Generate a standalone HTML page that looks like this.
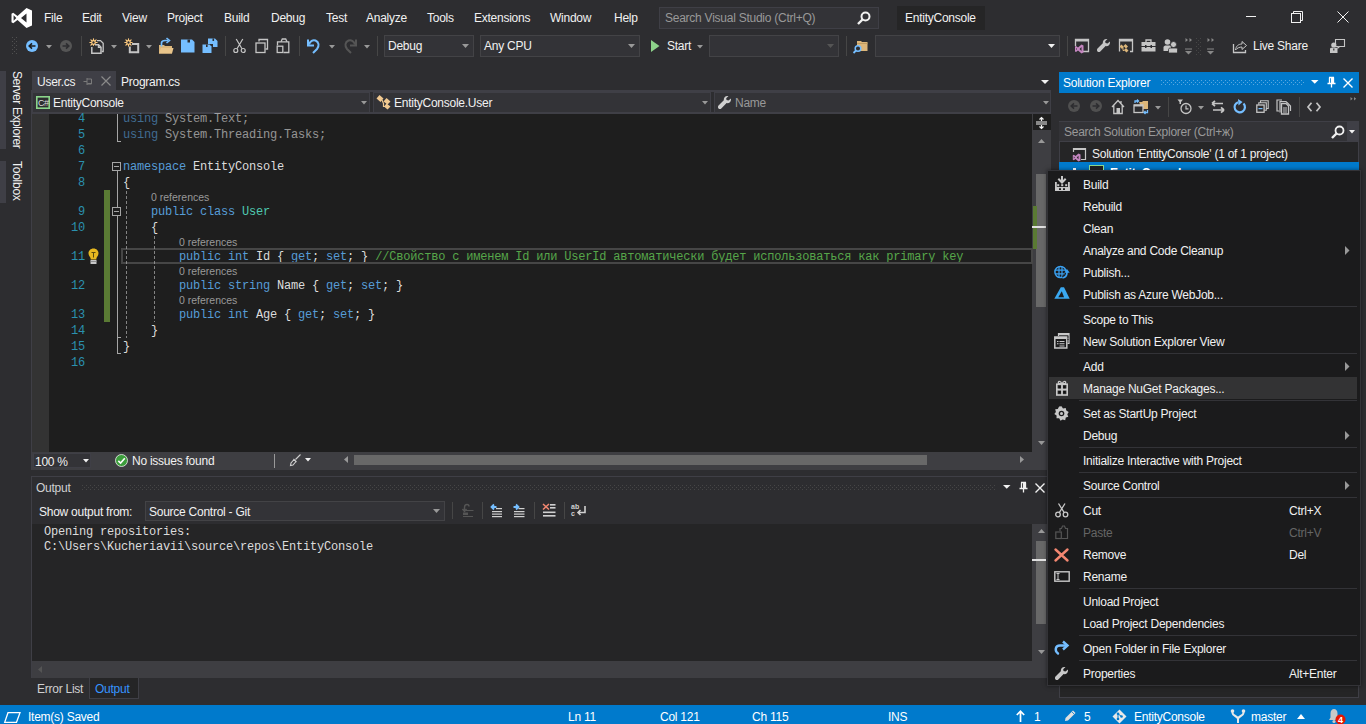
<!DOCTYPE html><html><head><meta charset="utf-8"><style>
html,body{margin:0;padding:0;}
body{width:1366px;height:724px;overflow:hidden;position:relative;background:#2d2d30;font-family:"Liberation Sans",sans-serif;font-size:12px;}
.a{position:absolute;}
.t{white-space:nowrap;font-family:"Liberation Sans",sans-serif;letter-spacing:-0.25px;}
.m{white-space:pre;font-family:"Liberation Mono",monospace;font-size:12px;letter-spacing:-0.2px;line-height:16px;}
svg{overflow:visible;}
</style></head><body>
<svg class="a" style="left:11px;top:8px;" width="22" height="20" viewBox="0 0 22 20"><path d="M15.5 0 L21 2.5 V17.5 L15.5 20 L6.5 12 L2.2 15.3 L0.5 14.3 V5.7 L2.2 4.7 L6.5 8 Z M15.5 5.5 L10 10 L15.5 14.5 Z M2.6 7.3 V12.7 L5.3 10 Z" fill="#fff" fill-rule="evenodd"/></svg>
<div class="a t" style="left:44px;top:12px;color:#f1f1f1;font-size:12px;line-height:12px;">File</div>
<div class="a t" style="left:82px;top:12px;color:#f1f1f1;font-size:12px;line-height:12px;">Edit</div>
<div class="a t" style="left:122px;top:12px;color:#f1f1f1;font-size:12px;line-height:12px;">View</div>
<div class="a t" style="left:167px;top:12px;color:#f1f1f1;font-size:12px;line-height:12px;">Project</div>
<div class="a t" style="left:224px;top:12px;color:#f1f1f1;font-size:12px;line-height:12px;">Build</div>
<div class="a t" style="left:271px;top:12px;color:#f1f1f1;font-size:12px;line-height:12px;">Debug</div>
<div class="a t" style="left:326px;top:12px;color:#f1f1f1;font-size:12px;line-height:12px;">Test</div>
<div class="a t" style="left:366px;top:12px;color:#f1f1f1;font-size:12px;line-height:12px;">Analyze</div>
<div class="a t" style="left:427px;top:12px;color:#f1f1f1;font-size:12px;line-height:12px;">Tools</div>
<div class="a t" style="left:474px;top:12px;color:#f1f1f1;font-size:12px;line-height:12px;">Extensions</div>
<div class="a t" style="left:550px;top:12px;color:#f1f1f1;font-size:12px;line-height:12px;">Window</div>
<div class="a t" style="left:614px;top:12px;color:#f1f1f1;font-size:12px;line-height:12px;">Help</div>
<div class="a" style="left:659px;top:7px;width:220px;height:22px;background:#333337;border:1px solid #3f3f46;box-sizing:border-box;"></div>
<div class="a t" style="left:665px;top:12px;color:#999999;font-size:12px;line-height:12px;">Search Visual Studio (Ctrl+Q)</div>
<svg class="a" style="left:857px;top:11px;" width="14" height="14" viewBox="0 0 14 14"><circle cx="8.5" cy="5.5" r="4" stroke="#f1f1f1" stroke-width="2" fill="none"/><path d="M5.5 8.5 L1 13" stroke="#f1f1f1" stroke-width="2.4"/></svg>
<div class="a" style="left:897px;top:6px;width:88px;height:24px;background:#252526;"></div>
<div class="a t" style="left:905px;top:12px;color:#f1f1f1;font-size:12px;line-height:12px;">EntityConsole</div>
<div class="a" style="left:1246px;top:16px;width:10px;height:1px;background:#f1f1f1;"></div>
<svg class="a" style="left:1291px;top:11px;" width="12" height="12" viewBox="0 0 12 12"><rect x="0.5" y="2.5" width="9" height="9" stroke="#f1f1f1" fill="none"/><path d="M2.5 2.5 V0.5 H11.5 V9.5 H9.5" stroke="#f1f1f1" fill="none"/></svg>
<svg class="a" style="left:1337px;top:11px;" width="12" height="12" viewBox="0 0 12 12"><path d="M0.5 0.5 L11.5 11.5 M11.5 0.5 L0.5 11.5" stroke="#f1f1f1" stroke-width="1"/></svg>
<div class="a" style="left:384px;top:35px;width:90px;height:22px;background:#333337;border:1px solid #434346;box-sizing:border-box;"></div>
<div class="a t" style="left:388px;top:40px;color:#f1f1f1;font-size:12px;line-height:12px;">Debug</div>
<svg class="a" style="left:462px;top:44px;" width="7" height="4" viewBox="0 0 7 4"><path d="M0 0 H7 L3.5 4 Z" fill="#999999"/></svg>
<div class="a" style="left:480px;top:35px;width:160px;height:22px;background:#333337;border:1px solid #434346;box-sizing:border-box;"></div>
<div class="a t" style="left:484px;top:40px;color:#f1f1f1;font-size:12px;line-height:12px;">Any CPU</div>
<svg class="a" style="left:628px;top:44px;" width="7" height="4" viewBox="0 0 7 4"><path d="M0 0 H7 L3.5 4 Z" fill="#999999"/></svg>
<div class="a" style="left:709px;top:35px;width:130px;height:22px;background:#333337;border:1px solid #434346;box-sizing:border-box;"></div>
<svg class="a" style="left:827px;top:44px;" width="7" height="4" viewBox="0 0 7 4"><path d="M0 0 H7 L3.5 4 Z" fill="#555555"/></svg>
<div class="a" style="left:875px;top:35px;width:185px;height:22px;background:#333337;border:1px solid #434346;box-sizing:border-box;"></div>
<svg class="a" style="left:1048px;top:44px;" width="7" height="4" viewBox="0 0 7 4"><path d="M0 0 H7 L3.5 4 Z" fill="#f1f1f1"/></svg>
<div class="a t" style="left:667px;top:40px;color:#f1f1f1;font-size:12px;line-height:12px;">Start</div>
<div class="a t" style="left:1253px;top:40px;color:#f1f1f1;font-size:12px;line-height:12px;">Live Share</div>
<svg class="a" style="left:12px;top:37px;" width="5" height="17" viewBox="0 0 5 17"><g fill="#505050"><rect x="0" y="0.0" width="1" height="1"/><rect x="4" y="0.0" width="1" height="1"/><rect x="0" y="4.0" width="1" height="1"/><rect x="4" y="4.0" width="1" height="1"/><rect x="0" y="8.0" width="1" height="1"/><rect x="4" y="8.0" width="1" height="1"/><rect x="0" y="12.0" width="1" height="1"/><rect x="4" y="12.0" width="1" height="1"/><rect x="0" y="16.0" width="1" height="1"/><rect x="4" y="16.0" width="1" height="1"/><rect x="2" y="2.0" width="1" height="1"/><rect x="2" y="6.0" width="1" height="1"/><rect x="2" y="10.0" width="1" height="1"/><rect x="2" y="14.0" width="1" height="1"/></g></svg>
<svg class="a" style="left:26px;top:40px;" width="12" height="12" viewBox="0 0 12 12"><circle cx="6" cy="6" r="6" fill="#75beff"/><path d="M9.5 6 H3.5 M6 3.3 L3.2 6 L6 8.7" stroke="#1e1e1e" stroke-width="1.6" fill="none"/></svg>
<svg class="a" style="left:46px;top:45px;" width="7" height="4" viewBox="0 0 7 4"><path d="M0 0 H6 L3 3.5 Z" fill="#999999"/></svg>
<svg class="a" style="left:60px;top:40px;" width="12" height="12" viewBox="0 0 12 12"><circle cx="6" cy="6" r="6" fill="#555555"/><path d="M2.5 6 H8.5 M6 3.3 L8.8 6 L6 8.7" stroke="#2d2d30" stroke-width="1.6" fill="none"/></svg>
<div class="a" style="left:81px;top:36px;width:1px;height:20px;background:#464646;"></div>
<svg class="a" style="left:89px;top:38px;" width="16" height="16" viewBox="0 0 16 16"><g stroke="#ffcc80" stroke-width="1.2" stroke-linecap="round"><path d="M0.8999999999999999 4.5 H8.1 M4.5 0.8999999999999999 V8.1 M1.9 1.9 L7.1 7.1 M7.1 1.9 L1.9 7.1"/></g><circle cx="4.5" cy="4.5" r="1.8" fill="#2d2d30" stroke="#ffcc80" stroke-width="1.2"/><path d="M8 2.6 H11.5 L14.2 5.3 V13.5 H12.8" stroke="#c5c5c5" fill="none" stroke-width="1.3"/><path d="M2.8 9 V15.2 H12 V9.2 L9.6 6.8 H6" stroke="#c5c5c5" fill="#2d2d30" stroke-width="1.5"/><path d="M9.4 6.8 V9.4 H12" stroke="#c5c5c5" fill="none" stroke-width="1.2"/></svg>
<svg class="a" style="left:111px;top:45px;" width="7" height="4" viewBox="0 0 7 4"><path d="M0 0 H6 L3 3.5 Z" fill="#999999"/></svg>
<svg class="a" style="left:124px;top:38px;" width="16" height="16" viewBox="0 0 16 16"><g stroke="#ffcc80" stroke-width="1.2" stroke-linecap="round"><path d="M0.8999999999999999 4.5 H8.1 M4.5 0.8999999999999999 V8.1 M1.9 1.9 L7.1 7.1 M7.1 1.9 L1.9 7.1"/></g><circle cx="4.5" cy="4.5" r="1.8" fill="#2d2d30" stroke="#ffcc80" stroke-width="1.2"/><path d="M8 6 H14.2 V14.2 H5.8 V8.5" stroke="#c5c5c5" stroke-width="2" fill="none"/></svg>
<svg class="a" style="left:146px;top:45px;" width="7" height="4" viewBox="0 0 7 4"><path d="M0 0 H6 L3 3.5 Z" fill="#999999"/></svg>
<svg class="a" style="left:158px;top:38px;" width="16" height="16" viewBox="0 0 16 16"><path d="M1 7 H6 L7 8 H14 V15.5 H1 Z" fill="#dcb67a"/><path d="M1 15.5 L3 10 H15.5 L14 15.5 Z" fill="#e8c48a"/><path d="M3.5 8.5 V5 C3.5 3.5 5 2.5 7 2.5 H10" stroke="#75beff" stroke-width="1.7" fill="none"/><path d="M8.5 0 L11.5 2.5 L8.5 5" stroke="#75beff" stroke-width="1.6" fill="none"/></svg>
<svg class="a" style="left:181px;top:39px;" width="14" height="14" viewBox="0 0 14 14"><path d="M0 0.5 H11 L13.5 3 V13.5 H0 Z" fill="#75beff"/><rect x="6.5" y="0.5" width="2.5" height="3" fill="#2d2d30"/></svg>
<svg class="a" style="left:202px;top:38px;" width="16" height="16" viewBox="0 0 16 16"><path d="M6 0.5 H13 L15.5 3 V9 H11 V6 H6 Z" fill="#75beff"/><rect x="10.5" y="0.5" width="1.6" height="2.5" fill="#2d2d30"/><path d="M0.5 6.5 H7.5 L9.5 8.5 V15 H0.5 Z" fill="#75beff"/><rect x="4" y="6.5" width="1.6" height="2.5" fill="#2d2d30"/></svg>
<div class="a" style="left:225px;top:36px;width:1px;height:20px;background:#464646;"></div>
<svg class="a" style="left:233px;top:38px;" width="14" height="16" viewBox="0 0 14 16"><g stroke="#c5c5c5" stroke-width="1.2" fill="none"><circle cx="2.8" cy="12.5" r="2"/><circle cx="10.2" cy="12.5" r="2"/><path d="M4 10.8 L9.8 1 M9 10.8 L3.2 1"/></g></svg>
<svg class="a" style="left:255px;top:38px;" width="14" height="16" viewBox="0 0 14 16"><g stroke="#c5c5c5" stroke-width="1.3" fill="#2d2d30"><path d="M4 3.5 V1.5 H12.5 V11 H10.5"/><rect x="1" y="5" width="9" height="9.5"/></g></svg>
<svg class="a" style="left:276px;top:38px;" width="14" height="16" viewBox="0 0 14 16"><g stroke="#c5c5c5" stroke-width="1.3" fill="none"><path d="M5 3.8 L6.3 1 H9.7 L11 3.8"/><path d="M4 3.8 H12.8 V14.5 H7.5"/><path d="M1.5 7.5 V3.8 H4"/><rect x="1.2" y="8.2" width="5.6" height="6.3"/></g></svg>
<div class="a" style="left:299px;top:36px;width:1px;height:20px;background:#464646;"></div>
<svg class="a" style="left:307px;top:38px;" width="15" height="16" viewBox="0 0 15 16"><path d="M2 6.5 C3 3 6 1.5 8.5 2.5 C12 4 12.5 8 10 11 L6 15" stroke="#75beff" stroke-width="2" fill="none"/><path d="M1 1.5 V7.5 H7" stroke="#75beff" stroke-width="2" fill="none"/></svg>
<svg class="a" style="left:329px;top:45px;" width="7" height="4" viewBox="0 0 7 4"><path d="M0 0 H6 L3 3.5 Z" fill="#999999"/></svg>
<svg class="a" style="left:342px;top:38px;" width="15" height="16" viewBox="0 0 15 16"><path d="M13 6.5 C12 3 9 1.5 6.5 2.5 C3 4 2.5 8 5 11 L9 15" stroke="#555555" stroke-width="2" fill="none"/><path d="M14 1.5 V7.5 H8" stroke="#555555" stroke-width="2" fill="none"/></svg>
<svg class="a" style="left:364px;top:45px;" width="7" height="4" viewBox="0 0 7 4"><path d="M0 0 H6 L3 3.5 Z" fill="#999999"/></svg>
<div class="a" style="left:377px;top:36px;width:1px;height:20px;background:#464646;"></div>
<svg class="a" style="left:651px;top:40px;" width="9" height="12" viewBox="0 0 9 12"><path d="M0 0 L8.5 6 L0 12 Z" fill="#8dd28a"/></svg>
<svg class="a" style="left:697px;top:45px;" width="7" height="4" viewBox="0 0 7 4"><path d="M0 0 H6 L3 3.5 Z" fill="#999999"/></svg>
<div class="a" style="left:846px;top:36px;width:1px;height:20px;background:#464646;"></div>
<svg class="a" style="left:853px;top:38px;" width="16" height="16" viewBox="0 0 16 16"><path d="M4 3 H8 L9 4 H14.5 V13 H4 Z" fill="#dcb67a"/><path d="M4 5.5 H14.5" stroke="#b8965a" stroke-width="0.8"/><circle cx="5" cy="10.5" r="2.8" stroke="#75beff" stroke-width="1.5" fill="#2d2d30"/><path d="M3 12.5 L0.5 15" stroke="#75beff" stroke-width="1.8"/></svg>
<div class="a" style="left:1067px;top:36px;width:1px;height:20px;background:#464646;"></div>
<svg class="a" style="left:1074px;top:38px;" width="16" height="16" viewBox="0 0 16 16"><path d="M1.5 8 V1.5 H14.5 V13.5 H9" stroke="#c5c5c5" stroke-width="1.3" fill="none"/><rect x="1" y="1" width="14" height="2.5" fill="#c5c5c5"/><path d="M7.5 6.5 L9.5 7.5 V14.5 L7.5 15.5 L4 12.5 L2 14 L1 13.5 V8.5 L2 8 L4 9.5 Z M7.5 9 L5.5 11 L7.5 13 Z M2 10 V12 L3 11 Z" fill="#c586c0" fill-rule="evenodd"/></svg>
<svg class="a" style="left:1096px;top:38px;" width="16" height="16" viewBox="0 0 16 16"><path d="M10.5 1 C8 1 6.5 3 6.8 5.3 L1.5 10.6 C0.8 11.3 0.8 12.7 1.5 13.4 C2.2 14.1 3.6 14.1 4.3 13.4 L9.6 8.1 C12 8.5 14 7 14 4.5 L14 3.5 L11.5 5.5 L9.5 5 L9.2 3.2 L11.5 1 Z" fill="#c5c5c5"/></svg>
<svg class="a" style="left:1118px;top:38px;" width="16" height="16" viewBox="0 0 16 16"><path d="M1.5 13.5 V1.5 H14.5 V13.5 H12" stroke="#c5c5c5" stroke-width="1.3" fill="none"/><rect x="1" y="1" width="14" height="2.5" fill="#c5c5c5"/><path d="M3.5 6.5 L6 9 L4 11 L1.5 8.5 Z M8 10 L10.5 12.5 L8.5 14.5 L6 12 Z M7.5 6 L10 8.5 L8 10.5 L5.5 8 Z" fill="#dcb67a"/><path d="M5 10 V12.5 H6.5" stroke="#dcb67a" fill="none"/></svg>
<svg class="a" style="left:1141px;top:38px;" width="16" height="16" viewBox="0 0 16 16"><path d="M5 4 V2 H10 V4" stroke="#c5c5c5" stroke-width="1.3" fill="none"/><rect x="0.5" y="4" width="14" height="4" fill="#c5c5c5"/><rect x="0.5" y="9" width="14" height="4.5" fill="#c5c5c5"/><rect x="4" y="7" width="1.5" height="3" fill="#2d2d30"/><rect x="9.5" y="7" width="1.5" height="3" fill="#2d2d30"/></svg>
<svg class="a" style="left:1163px;top:38px;" width="16" height="16" viewBox="0 0 16 16"><circle cx="4.5" cy="4" r="2.8" fill="#c5c5c5"/><path d="M0.5 13 V9.5 C0.5 8 2 7.5 3 7.5 H6 C7 7.5 8 8 8 9 V13 Z" fill="#c5c5c5"/><circle cx="10.5" cy="6.5" r="3" fill="#c5c5c5" stroke="#2d2d30" stroke-width="0.8"/><path d="M5.5 15 V11.5 C5.5 10.5 6.5 10 7.5 10 H13 C14 10 14.5 10.5 14.5 11.5 V15 Z" fill="#c5c5c5" stroke="#2d2d30" stroke-width="0.8"/></svg>
<svg class="a" style="left:1185px;top:38px;" width="8" height="17" viewBox="0 0 8 17"><path d="M0.5 0 L3 2 L0.5 4 Z M4.5 0 L7 2 L4.5 4 Z" fill="#888"/><rect x="0" y="10.5" width="7" height="1" fill="#888"/><path d="M0 13 H7 L3.5 16.5 Z" fill="#888"/></svg>
<svg class="a" style="left:1196px;top:38px;" width="5" height="17" viewBox="0 0 5 17"><g fill="#464646"><rect x="0" y="0.0" width="1" height="1"/><rect x="4" y="0.0" width="1" height="1"/><rect x="0" y="4.0" width="1" height="1"/><rect x="4" y="4.0" width="1" height="1"/><rect x="0" y="8.0" width="1" height="1"/><rect x="4" y="8.0" width="1" height="1"/><rect x="0" y="12.0" width="1" height="1"/><rect x="4" y="12.0" width="1" height="1"/><rect x="0" y="16.0" width="1" height="1"/><rect x="4" y="16.0" width="1" height="1"/><rect x="2" y="2.0" width="1" height="1"/><rect x="2" y="6.0" width="1" height="1"/><rect x="2" y="10.0" width="1" height="1"/><rect x="2" y="14.0" width="1" height="1"/></g></svg>
<svg class="a" style="left:1207px;top:38px;" width="8" height="17" viewBox="0 0 8 17"><path d="M0.5 0 L3 2 L0.5 4 Z M4.5 0 L7 2 L4.5 4 Z" fill="#888"/><rect x="0" y="10.5" width="7" height="1" fill="#888"/><path d="M0 13 H7 L3.5 16.5 Z" fill="#888"/></svg>
<svg class="a" style="left:1232px;top:39px;" width="16" height="15" viewBox="0 0 16 15"><path d="M1.5 5 V13.5 H13.5 V11" stroke="#c5c5c5" stroke-width="1.3" fill="none"/><path d="M3.5 11 C4 7 6.5 5 10 5 V2.5 L14.5 6.5 L10 10.5 V8 C7.5 8 5 9 3.5 11 Z" stroke="#c5c5c5" stroke-width="1" fill="none"/></svg>
<svg class="a" style="left:1330px;top:38px;" width="16" height="16" viewBox="0 0 16 16"><path d="M5.5 1.5 H14.5 V8.5 H9.5 L8 10 V8.5 H5.5 Z" stroke="#c5c5c5" stroke-width="1.1" fill="none"/><circle cx="3.8" cy="7" r="2.6" fill="#c5c5c5"/><path d="M0 15 V11 C0 10 1 9.8 1.5 9.8 H6 C7 9.8 7.5 10.3 7.5 11 V15 Z" fill="#c5c5c5"/><rect x="3.2" y="10.5" width="1.2" height="2" fill="#2d2d30"/></svg>
<div class="a" style="left:0px;top:71px;width:6px;height:78px;background:#3f3f46;"></div>
<div class="a" style="left:0px;top:161px;width:6px;height:42px;background:#3f3f46;"></div>
<div class="a t" style="left:23px;top:71px;transform-origin:0 0;transform:rotate(90deg);color:#f1f1f1;line-height:12px;letter-spacing:-0.4px;">Server Explorer</div>
<div class="a t" style="left:23px;top:161px;transform-origin:0 0;transform:rotate(90deg);color:#f1f1f1;line-height:12px;">Toolbox</div>
<div class="a" style="left:32px;top:71px;width:84px;height:19px;background:#3f3f46;"></div>
<div class="a t" style="left:37px;top:76px;color:#f1f1f1;font-size:12px;line-height:12px;">User.cs</div>
<div class="a t" style="left:121px;top:76px;color:#f1f1f1;font-size:12px;line-height:12px;">Program.cs</div>
<div class="a" style="left:32px;top:90px;width:1019px;height:24px;background:#3f3f46;"></div>
<div class="a" style="left:33px;top:93px;width:336px;height:19px;background:#333337;"></div>
<div class="a" style="left:374px;top:93px;width:336px;height:19px;background:#333337;"></div>
<div class="a" style="left:715px;top:93px;width:335px;height:19px;background:#333337;"></div>
<div class="a" style="left:370px;top:92px;width:3px;height:20px;background:#2d2d30;"></div>
<div class="a" style="left:711px;top:92px;width:3px;height:20px;background:#2d2d30;"></div>
<div class="a t" style="left:53px;top:97px;color:#f1f1f1;font-size:12px;line-height:12px;">EntityConsole</div>
<div class="a t" style="left:394px;top:97px;color:#f1f1f1;font-size:12px;line-height:12px;">EntityConsole.User</div>
<div class="a t" style="left:735px;top:97px;color:#999999;font-size:12px;line-height:12px;">Name</div>
<div class="a" style="left:31px;top:90px;width:1px;height:380px;background:#3f3f46;"></div>
<div class="a" style="left:32px;top:114px;width:1000px;height:338px;background:#1e1e1e;"></div>
<div class="a" style="left:32px;top:114px;width:17px;height:338px;background:#333333;"></div>
<div class="a" style="left:1032px;top:114px;width:19px;height:338px;background:#3e3e42;"></div>
<div class="a" style="left:1033px;top:114px;width:18px;height:16px;background:#1e1e1e;"></div>
<div class="a" style="left:1036px;top:174px;width:10px;height:133px;background:#686868;"></div>
<div class="a" style="left:1033px;top:206px;width:4px;height:43px;background:#5a7a34;"></div>
<div class="a" style="left:1032px;top:226px;width:14px;height:2px;background:#e0e0e0;"></div>
<div class="a m" style="left:60px;top:111px;width:25px;text-align:right;color:#2b91af">4</div>
<div class="a m" style="left:123px;top:111px;color:#dcdcdc;opacity:0.62"><span style="color:#569cd6">using</span> System.Text;</div>
<div class="a m" style="left:60px;top:127px;width:25px;text-align:right;color:#2b91af">5</div>
<div class="a m" style="left:123px;top:127px;color:#dcdcdc;opacity:0.62"><span style="color:#569cd6">using</span> System.Threading.Tasks;</div>
<div class="a m" style="left:60px;top:143px;width:25px;text-align:right;color:#2b91af">6</div>
<div class="a m" style="left:60px;top:159px;width:25px;text-align:right;color:#2b91af">7</div>
<div class="a m" style="left:123px;top:159px;color:#dcdcdc"><span style="color:#569cd6">namespace</span> EntityConsole</div>
<div class="a m" style="left:60px;top:175px;width:25px;text-align:right;color:#2b91af">8</div>
<div class="a m" style="left:123px;top:175px;color:#dcdcdc">{</div>
<div class="a m" style="left:60px;top:204px;width:25px;text-align:right;color:#2b91af">9</div>
<div class="a m" style="left:151px;top:204px;color:#dcdcdc"><span style="color:#569cd6">public</span> <span style="color:#569cd6">class</span> <span style="color:#4ec9b0">User</span></div>
<div class="a m" style="left:60px;top:220px;width:25px;text-align:right;color:#2b91af">10</div>
<div class="a m" style="left:151px;top:220px;color:#dcdcdc">{</div>
<div class="a m" style="left:60px;top:249px;width:25px;text-align:right;color:#2b91af">11</div>
<div class="a m" style="left:179px;top:249px;color:#dcdcdc"><span style="color:#569cd6">public</span> <span style="color:#569cd6">int</span> Id { <span style="color:#569cd6">get</span>; <span style="color:#569cd6">set</span>; } <span style="color:#57a64a">//Свойство с именем Id или UserId автоматически будет использоваться как primary key</span></div>
<div class="a m" style="left:60px;top:278px;width:25px;text-align:right;color:#2b91af">12</div>
<div class="a m" style="left:179px;top:278px;color:#dcdcdc"><span style="color:#569cd6">public</span> <span style="color:#569cd6">string</span> Name { <span style="color:#569cd6">get</span>; <span style="color:#569cd6">set</span>; }</div>
<div class="a m" style="left:60px;top:307px;width:25px;text-align:right;color:#2b91af">13</div>
<div class="a m" style="left:179px;top:307px;color:#dcdcdc"><span style="color:#569cd6">public</span> <span style="color:#569cd6">int</span> Age { <span style="color:#569cd6">get</span>; <span style="color:#569cd6">set</span>; }</div>
<div class="a m" style="left:60px;top:323px;width:25px;text-align:right;color:#2b91af">14</div>
<div class="a m" style="left:151px;top:323px;color:#dcdcdc">}</div>
<div class="a m" style="left:60px;top:339px;width:25px;text-align:right;color:#2b91af">15</div>
<div class="a m" style="left:123px;top:339px;color:#dcdcdc">}</div>
<div class="a m" style="left:60px;top:355px;width:25px;text-align:right;color:#2b91af">16</div>
<div class="a t" style="left:151px;top:191px;font-size:10.5px;letter-spacing:0;line-height:12px;color:#999999">0 references</div>
<div class="a t" style="left:179px;top:236px;font-size:10.5px;letter-spacing:0;line-height:12px;color:#999999">0 references</div>
<div class="a t" style="left:179px;top:265px;font-size:10.5px;letter-spacing:0;line-height:12px;color:#999999">0 references</div>
<div class="a t" style="left:179px;top:294px;font-size:10.5px;letter-spacing:0;line-height:12px;color:#999999">0 references</div>
<div class="a" style="left:121px;top:248px;width:912px;height:16px;border:2px solid #464646;box-sizing:border-box;"></div>
<div class="a" style="left:117px;top:114px;width:1px;height:27px;background:#a5a5a5;"></div>
<div class="a" style="left:117px;top:141px;width:4px;height:1px;background:#a5a5a5;"></div>
<div class="a" style="left:117px;top:171px;width:1px;height:183px;background:#a5a5a5;"></div>
<div class="a" style="left:117px;top:337px;width:4px;height:1px;background:#a5a5a5;"></div>
<div class="a" style="left:117px;top:353px;width:4px;height:1px;background:#a5a5a5;"></div>
<div class="a" style="left:112px;top:162px;width:9px;height:9px;background:#1e1e1e;border:1px solid #a5a5a5;box-sizing:border-box;"></div>
<div class="a" style="left:114px;top:166px;width:5px;height:1px;background:#a5a5a5;"></div>
<div class="a" style="left:112px;top:207px;width:9px;height:9px;background:#1e1e1e;border:1px solid #a5a5a5;box-sizing:border-box;"></div>
<div class="a" style="left:114px;top:211px;width:5px;height:1px;background:#a5a5a5;"></div>
<div class="a" style="left:126px;top:191px;width:1px;height:147px;background:repeating-linear-gradient(to bottom,#a5a5a5 0 3px,transparent 3px 5px);opacity:0.75"></div>
<div class="a" style="left:154px;top:236px;width:1px;height:86px;background:repeating-linear-gradient(to bottom,#a5a5a5 0 3px,transparent 3px 5px);opacity:0.75"></div>
<div class="a" style="left:104px;top:190px;width:6px;height:132px;background:#5a7a34;"></div>
<svg class="a" style="left:88px;top:248px;" width="11" height="17" viewBox="0 0 11 17"><path d="M5.5 0.5 C2.5 0.5 0.5 2.7 0.5 5.3 C0.5 7.5 2 8.6 2.6 10.2 V11.5 H8.4 V10.2 C9 8.6 10.5 7.5 10.5 5.3 C10.5 2.7 8.5 0.5 5.5 0.5 Z" fill="#e8b820"/><path d="M3.5 4.5 H7.5 M5.5 4.5 V9.5" stroke="#5a4a10" stroke-width="1"/><rect x="2.5" y="12" width="6" height="4" fill="#c8c8c8"/><path d="M2.5 13.5 H8.5" stroke="#808080" stroke-width="0.8"/></svg>
<div class="a" style="left:32px;top:452px;width:1019px;height:18px;background:#3e3e42;"></div>
<div class="a" style="left:33px;top:453px;width:58px;height:15px;background:#333337;border:1px solid #3f3f46;box-sizing:border-box;"></div>
<svg class="a" style="left:83px;top:459px;" width="6" height="4" viewBox="0 0 6 4"><path d="M0 0 H6 L3 3.5 Z" fill="#f1f1f1"/></svg>
<div class="a t" style="left:35px;top:456px;color:#f1f1f1;font-size:12px;line-height:12px;">100 %</div>
<div class="a t" style="left:132px;top:455px;color:#f1f1f1;font-size:12px;line-height:12px;">No issues found</div>
<div class="a" style="left:274px;top:454px;width:1px;height:14px;background:#999999;"></div>
<div class="a" style="left:354px;top:455px;width:573px;height:10px;background:#686868;"></div>
<div class="a" style="left:31px;top:476px;width:1020px;height:202px;background:#2d2d30;border:1px solid #3f3f46;border-bottom:none;box-sizing:border-box;"></div>
<div class="a t" style="left:36px;top:482px;color:#d0d0d0;font-size:12px;line-height:12px;">Output</div>
<div class="a t" style="left:39px;top:506px;color:#f1f1f1;font-size:12px;line-height:12px;">Show output from:</div>
<div class="a" style="left:145px;top:501px;width:300px;height:20px;background:#333337;border:1px solid #434346;box-sizing:border-box;"></div>
<div class="a t" style="left:149px;top:506px;color:#f1f1f1;font-size:12px;line-height:12px;">Source Control - Git</div>
<svg class="a" style="left:433px;top:509px;" width="7" height="4" viewBox="0 0 7 4"><path d="M0 0 H7 L3.5 4 Z" fill="#999999"/></svg>
<div class="a" style="left:32px;top:524px;width:1018px;height:137px;background:#252526;"></div>
<div class="a m" style="left:44px;top:525px;color:#dcdcdc;line-height:15px">Opening repositories:<br>C:\Users\Kucheriavii\source\repos\EntityConsole</div>
<div class="a" style="left:1032px;top:524px;width:18px;height:137px;background:#3e3e42;"></div>
<div class="a" style="left:1036px;top:541px;width:10px;height:83px;background:#686868;"></div>
<svg class="a" style="left:1038px;top:650px;" width="7" height="4" viewBox="0 0 7 4"><path d="M0 0 H7 L3.5 4 Z" fill="#999999"/></svg>
<svg class="a" style="left:1021px;top:666px;" width="4" height="7" viewBox="0 0 4 7"><path d="M0 0 V7 L4 3.5 Z" fill="#555555"/></svg>
<div class="a" style="left:32px;top:661px;width:1018px;height:17px;background:#3e3e42;"></div>
<div class="a" style="left:32px;top:678px;width:1019px;height:20px;background:#2d2d30;"></div>
<div class="a t" style="left:37px;top:683px;color:#d0d0d0;font-size:12px;line-height:12px;">Error List</div>
<div class="a" style="left:89px;top:678px;width:50px;height:21px;background:#252526;border:1px solid #3f3f46;border-top:none;box-sizing:border-box;"></div>
<div class="a t" style="left:95px;top:683px;color:#3794ff;font-size:12px;line-height:12px;">Output</div>
<div class="a" style="left:1059px;top:72px;width:300px;height:626px;background:#252526;border:1px solid #3f3f46;box-sizing:border-box;"></div>
<div class="a" style="left:1059px;top:72px;width:300px;height:21px;background:#007acc;"></div>
<div class="a t" style="left:1063px;top:77px;color:#ffffff;font-size:12px;line-height:12px;">Solution Explorer</div>
<div class="a" style="left:1059px;top:93px;width:300px;height:29px;background:#2d2d30;"></div>
<div class="a" style="left:1059px;top:122px;width:300px;height:19px;background:#333337;"></div>
<div class="a" style="left:1347px;top:122px;width:12px;height:19px;background:#3f3f46;"></div>
<div class="a" style="left:1059px;top:121px;width:300px;height:1px;background:#3f3f46;"></div>
<div class="a" style="left:1059px;top:141px;width:300px;height:1px;background:#3f3f46;"></div>
<div class="a t" style="left:1064px;top:126px;color:#999999;font-size:12px;line-height:12px;">Search Solution Explorer (Ctrl+ж)</div>
<div class="a t" style="left:1092px;top:148px;color:#f1f1f1;font-size:12px;line-height:12px;">Solution 'EntityConsole' (1 of 1 project)</div>
<div class="a" style="left:1059px;top:162px;width:300px;height:9px;background:#007acc;"></div>
<svg class="a" style="left:1161px;top:80px" width="143" height="5"><defs><pattern id="p116180" width="4" height="4" patternUnits="userSpaceOnUse"><rect x="0" y="0" width="1" height="1" fill="#59a8e0"/><rect x="2" y="2" width="1" height="1" fill="#59a8e0"/></pattern></defs><rect width="143" height="5" fill="url(#p116180)"/></svg>
<svg class="a" style="left:1311px;top:80px;" width="8" height="4" viewBox="0 0 8 4"><path d="M0 0 H7.5 L3.75 3.8 Z" fill="#ffffff"/></svg>
<svg class="a" style="left:1327px;top:77px;" width="9" height="11" viewBox="0 0 9 11"><path d="M2 0.5 H7 M2.5 0.5 V6 M6.5 0.5 V6 M0.5 6.5 H8.5 M4.5 6.5 V10.5" stroke="#fff" stroke-width="1.3" fill="none"/><rect x="4" y="1" width="2.5" height="5" fill="#fff"/></svg>
<svg class="a" style="left:1343px;top:78px;" width="10" height="10" viewBox="0 0 10 10"><path d="M0.5 0.5 L9.5 9.5 M9.5 0.5 L0.5 9.5" stroke="#fff" stroke-width="1.4"/></svg>
<svg class="a" style="left:1068px;top:100px;" width="12" height="12" viewBox="0 0 12 12"><circle cx="6" cy="6" r="6" fill="#505050"/><path d="M9.5 6 H3.5 M6 3.3 L3.2 6 L6 8.7" stroke="#2d2d30" stroke-width="1.6" fill="none"/></svg>
<svg class="a" style="left:1090px;top:100px;" width="12" height="12" viewBox="0 0 12 12"><circle cx="6" cy="6" r="6" fill="#505050"/><path d="M2.5 6 H8.5 M6 3.3 L8.8 6 L6 8.7" stroke="#2d2d30" stroke-width="1.6" fill="none"/></svg>
<svg class="a" style="left:1111px;top:99px;" width="15" height="16" viewBox="0 0 15 16"><path d="M1 8 L7 1.5 L13 8 M2.8 6.5 V14.5 H11.2 V6.5 M10 2 V4.5" stroke="#c5c5c5" stroke-width="1.3" fill="none"/><rect x="5.5" y="9" width="3.5" height="5.5" fill="#c5c5c5"/></svg>
<svg class="a" style="left:1133px;top:99px;" width="16" height="16" viewBox="0 0 16 16"><path d="M6 3 H9 L10 2 H15 V10 H9 Z" fill="#dcb67a"/><rect x="1" y="6" width="9" height="7.5" stroke="#c5c5c5" stroke-width="1.3" fill="#2d2d30"/><path d="M1 6.5 H10" stroke="#c5c5c5" stroke-width="2"/><path d="M2 4 V2 H5 M4 0.5 L5.5 2 L4 3.5" stroke="#75beff" stroke-width="1.3" fill="none"/><path d="M14.5 11 V13.5 H11 M12.5 12 L11 13.5 L12.5 15" stroke="#75beff" stroke-width="1.3" fill="none"/></svg>
<svg class="a" style="left:1155px;top:106px;" width="7" height="4" viewBox="0 0 7 4"><path d="M0 0 H6 L3 3.5 Z" fill="#999999"/></svg>
<div class="a" style="left:1168px;top:97px;width:1px;height:20px;background:#464646;"></div>
<svg class="a" style="left:1177px;top:99px;" width="16" height="16" viewBox="0 0 16 16"><path d="M0.5 0.5 H6 L4 3 V5 H2.5 V3 Z" fill="#c5c5c5"/><circle cx="9" cy="9.5" r="5" stroke="#c5c5c5" stroke-width="1.3" fill="none"/><path d="M9 6.5 V9.8 H11.5" stroke="#c5c5c5" stroke-width="1.2" fill="none"/></svg>
<svg class="a" style="left:1198px;top:106px;" width="7" height="4" viewBox="0 0 7 4"><path d="M0 0 H6 L3 3.5 Z" fill="#999999"/></svg>
<svg class="a" style="left:1211px;top:100px;" width="14" height="14" viewBox="0 0 14 14"><path d="M1 3.5 H12 M1 3.5 L4 0.8 M1 3.5 L4 6.2 M13 10 H2 M13 10 L10 7.3 M13 10 L10 12.7" stroke="#c5c5c5" stroke-width="1.7" fill="none"/></svg>
<svg class="a" style="left:1233px;top:99px;" width="14" height="16" viewBox="0 0 14 16"><path d="M10.5 4.5 A5.2 5.2 0 1 1 5 3.2" stroke="#75beff" stroke-width="2.2" fill="none"/><path d="M5 0 L9.5 3 L5.5 6.5 Z" fill="#75beff"/></svg>
<svg class="a" style="left:1256px;top:100px;" width="13" height="13" viewBox="0 0 13 13"><path d="M4.5 3 V0.8 H12.2 V8.5 H10 M2.8 4.8 V2.8 H10.3 V10.3 H8.3" stroke="#c5c5c5" stroke-width="1.1" fill="none"/><rect x="0.8" y="5" width="7.3" height="7.3" stroke="#c5c5c5" stroke-width="1.3" fill="#2d2d30"/><rect x="2.5" y="8" width="4" height="1.2" fill="#75beff"/></svg>
<svg class="a" style="left:1276px;top:99px;" width="16" height="16" viewBox="0 0 16 16"><path d="M3 12 H1 V1 H6 M4 13.5 V2.5 H10 L13 5.5 M14.5 12 V7 L11.5 4" stroke="#c5c5c5" stroke-width="1.2" fill="none"/><path d="M5.5 4.5 H10 L12.5 7 V15 H5.5 Z" stroke="#c5c5c5" stroke-width="1.3" fill="#2d2d30"/><path d="M7 9 H11 M7 11 H11 M7 13 H11" stroke="#c5c5c5" stroke-width="1"/></svg>
<div class="a" style="left:1299px;top:97px;width:1px;height:20px;background:#464646;"></div>
<svg class="a" style="left:1307px;top:102px;" width="14" height="10" viewBox="0 0 14 10"><path d="M4.5 0.8 L1 5 L4.5 9.2 M9.5 0.8 L13 5 L9.5 9.2" stroke="#c5c5c5" stroke-width="1.7" fill="none"/></svg>
<svg class="a" style="left:1350px;top:97px;" width="7" height="4" viewBox="0 0 7 4"><path d="M0.5 0 L2.7 1.8 L0.5 3.6 Z M4 0 L6.2 1.8 L4 3.6 Z" fill="#888"/></svg>
<svg class="a" style="left:1331px;top:125px;" width="14" height="14" viewBox="0 0 14 14"><circle cx="8.5" cy="5.5" r="4" stroke="#f1f1f1" stroke-width="1.8" fill="none"/><path d="M5.5 8.5 L1 13" stroke="#f1f1f1" stroke-width="2.4"/></svg>
<svg class="a" style="left:1349px;top:130px;" width="6" height="4" viewBox="0 0 6 4"><path d="M0 0 H6 L3 3.5 Z" fill="#f1f1f1"/></svg>
<svg class="a" style="left:1072px;top:147px;" width="15" height="15" viewBox="0 0 15 15"><path d="M1.5 5 V1.5 H13.5 V12.5 H9" stroke="#c5c5c5" stroke-width="1.2" fill="none"/><rect x="1" y="1" width="13" height="2" fill="#c5c5c5"/><path d="M6.5 6.5 L8.5 7.5 V13.5 L6.5 14.5 L3.5 12 L1.8 13.2 L0.8 12.7 V8.3 L1.8 7.8 L3.5 9 Z M6.5 8.8 L4.8 10.5 L6.5 12.2 Z M1.8 9.5 V11.5 L2.8 10.5 Z" fill="#c586c0" fill-rule="evenodd"/></svg>
<svg class="a" style="left:83px;top:77px;" width="10" height="9" viewBox="0 0 10 9"><path d="M0.5 4.5 H4 M4 1 V8 M4 2 H8.5 V7 H4 M4.5 6.5 H8" stroke="#7a7a7a" stroke-width="1" fill="none"/></svg>
<svg class="a" style="left:101px;top:76px;" width="10" height="10" viewBox="0 0 10 10"><path d="M0.5 0.5 L9.5 9.5 M9.5 0.5 L0.5 9.5" stroke="#8a8a8a" stroke-width="1.2"/></svg>
<svg class="a" style="left:1041px;top:80px;" width="8" height="4" viewBox="0 0 8 4"><path d="M0 0 H8 L4 4 Z" fill="#f1f1f1"/></svg>
<svg class="a" style="left:36px;top:96px;" width="14" height="13" viewBox="0 0 14 13"><rect x="0.8" y="0.8" width="12.4" height="11.4" stroke="#8bd58b" stroke-width="1.6" fill="#2d2d30"/><text x="2" y="9.6" font-family="Liberation Sans" font-size="9" fill="#dcdcdc" letter-spacing="-0.6">C#</text></svg>
<svg class="a" style="left:361px;top:101px;" width="7" height="4" viewBox="0 0 7 4"><path d="M0 0 H6 L3 3.5 Z" fill="#999999"/></svg>
<svg class="a" style="left:376px;top:94px;" width="16" height="16" viewBox="0 0 16 16"><path d="M3.5 1 L7.5 4.5 L4.5 8 L0.5 4.5 Z M10.5 4 L14.5 7.5 L11.5 10.5 L7.5 7.5 Z M10.5 9.5 L14.5 12.5 L11.5 15.5 L8 12.5 Z" fill="#f0c890"/><path d="M6 6 L7.5 9.5 V12.5 H9" stroke="#f0c890" stroke-width="1.2" fill="none"/></svg>
<svg class="a" style="left:702px;top:101px;" width="7" height="4" viewBox="0 0 7 4"><path d="M0 0 H6 L3 3.5 Z" fill="#999999"/></svg>
<svg class="a" style="left:717px;top:95px;" width="15" height="15" viewBox="0 0 15 15"><path d="M10.5 1 C8 1 6.5 3 6.8 5.3 L1.5 10.6 C0.8 11.3 0.8 12.7 1.5 13.4 C2.2 14.1 3.6 14.1 4.3 13.4 L9.6 8.1 C12 8.5 14 7 14 4.5 L14 3.5 L11.5 5.5 L9.5 5 L9.2 3.2 L11.5 1 Z" fill="#d0d0d0"/></svg>
<svg class="a" style="left:1043px;top:101px;" width="7" height="4" viewBox="0 0 7 4"><path d="M0 0 H6 L3 3.5 Z" fill="#999999"/></svg>
<svg class="a" style="left:1036px;top:117px;" width="11" height="12" viewBox="0 0 11 12"><path d="M0 5 H11 M0 7 H11 M5.5 0.5 V4 M5.5 8 V11.5 M3.5 2.5 L5.5 0.5 L7.5 2.5 M3.5 9.5 L5.5 11.5 L7.5 9.5" stroke="#f1f1f1" stroke-width="1.2" fill="none"/></svg>
<svg class="a" style="left:1038px;top:139px;" width="7" height="4" viewBox="0 0 7 4"><path d="M0 4 H7 L3.5 0 Z" fill="#999999"/></svg>
<svg class="a" style="left:1038px;top:441px;" width="7" height="4" viewBox="0 0 7 4"><path d="M0 0 H7 L3.5 4 Z" fill="#999999"/></svg>
<svg class="a" style="left:1020px;top:456px;" width="4" height="7" viewBox="0 0 4 7"><path d="M0 0 V7 L4 3.5 Z" fill="#999999"/></svg>
<svg class="a" style="left:344px;top:456px;" width="4" height="7" viewBox="0 0 4 7"><path d="M4 0 V7 L0 3.5 Z" fill="#999999"/></svg>
<svg class="a" style="left:115px;top:454px;" width="13" height="13" viewBox="0 0 13 13"><circle cx="6.5" cy="6.5" r="6" fill="#3c9e3c" stroke="#f1f1f1" stroke-width="0.8"/><path d="M3.3 6.8 L5.6 9 L9.8 4.3" stroke="#fff" stroke-width="1.6" fill="none"/></svg>
<svg class="a" style="left:290px;top:454px;" width="11" height="12" viewBox="0 0 11 12"><path d="M10.5 0.5 L5.5 5.5 M3.5 5 L6.5 8 M4 5.5 L1 9 L0.5 11.5 L3 11 L6 7.5" stroke="#d0d0d0" stroke-width="1.1" fill="none"/></svg>
<svg class="a" style="left:305px;top:458px;" width="7" height="4" viewBox="0 0 7 4"><path d="M0 0 H6 L3 3.5 Z" fill="#f1f1f1"/></svg>
<div class="a" style="left:0px;top:705px;width:1366px;height:19px;background:#007acc;"></div>
<div class="a t" style="left:28px;top:711px;color:#ffffff;font-size:12px;line-height:12px;">Item(s) Saved</div>
<div class="a t" style="left:568px;top:711px;color:#ffffff;font-size:12px;line-height:12px;">Ln 11</div>
<div class="a t" style="left:660px;top:711px;color:#ffffff;font-size:12px;line-height:12px;">Col 121</div>
<div class="a t" style="left:752px;top:711px;color:#ffffff;font-size:12px;line-height:12px;">Ch 115</div>
<div class="a t" style="left:888px;top:711px;color:#ffffff;font-size:12px;line-height:12px;">INS</div>
<div class="a t" style="left:1034px;top:711px;color:#ffffff;font-size:12px;line-height:12px;">1</div>
<div class="a t" style="left:1084px;top:711px;color:#ffffff;font-size:12px;line-height:12px;">5</div>
<div class="a t" style="left:1134px;top:711px;color:#ffffff;font-size:12px;line-height:12px;">EntityConsole</div>
<div class="a t" style="left:1251px;top:711px;color:#ffffff;font-size:12px;line-height:12px;">master</div>
<div class="a" style="left:1047px;top:170px;width:314px;height:516px;background:#1b1b1c;border:1px solid #333337;box-sizing:border-box;box-shadow:0 0 4px rgba(0,0,0,0.5);"></div>
<div class="a t" style="left:1083px;top:179px;color:#f1f1f1;font-size:12px;line-height:12px;">Build</div>
<div class="a t" style="left:1083px;top:201px;color:#f1f1f1;font-size:12px;line-height:12px;">Rebuild</div>
<div class="a t" style="left:1083px;top:223px;color:#f1f1f1;font-size:12px;line-height:12px;">Clean</div>
<div class="a t" style="left:1083px;top:245px;color:#f1f1f1;font-size:12px;line-height:12px;">Analyze and Code Cleanup</div>
<svg class="a" style="left:1345px;top:246px;" width="5" height="9" viewBox="0 0 5 9"><path d="M0 0 L4.5 4.5 L0 9 Z" fill="#999999"/></svg>
<div class="a t" style="left:1083px;top:267px;color:#f1f1f1;font-size:12px;line-height:12px;">Publish...</div>
<div class="a t" style="left:1083px;top:289px;color:#f1f1f1;font-size:12px;line-height:12px;">Publish as Azure WebJob...</div>
<div class="a" style="left:1079px;top:306px;width:278px;height:1px;background:#333337;"></div>
<div class="a t" style="left:1083px;top:314px;color:#f1f1f1;font-size:12px;line-height:12px;">Scope to This</div>
<div class="a t" style="left:1083px;top:336px;color:#f1f1f1;font-size:12px;line-height:12px;">New Solution Explorer View</div>
<div class="a" style="left:1079px;top:353px;width:278px;height:1px;background:#333337;"></div>
<div class="a t" style="left:1083px;top:361px;color:#f1f1f1;font-size:12px;line-height:12px;">Add</div>
<svg class="a" style="left:1345px;top:362px;" width="5" height="9" viewBox="0 0 5 9"><path d="M0 0 L4.5 4.5 L0 9 Z" fill="#999999"/></svg>
<div class="a" style="left:1049px;top:377px;width:308px;height:22px;background:#333334;"></div>
<div class="a t" style="left:1083px;top:383px;color:#f1f1f1;font-size:12px;line-height:12px;">Manage NuGet Packages...</div>
<div class="a" style="left:1079px;top:400px;width:278px;height:1px;background:#333337;"></div>
<div class="a t" style="left:1083px;top:408px;color:#f1f1f1;font-size:12px;line-height:12px;">Set as StartUp Project</div>
<div class="a t" style="left:1083px;top:430px;color:#f1f1f1;font-size:12px;line-height:12px;">Debug</div>
<svg class="a" style="left:1345px;top:431px;" width="5" height="9" viewBox="0 0 5 9"><path d="M0 0 L4.5 4.5 L0 9 Z" fill="#999999"/></svg>
<div class="a" style="left:1079px;top:447px;width:278px;height:1px;background:#333337;"></div>
<div class="a t" style="left:1083px;top:455px;color:#f1f1f1;font-size:12px;line-height:12px;">Initialize Interactive with Project</div>
<div class="a" style="left:1079px;top:472px;width:278px;height:1px;background:#333337;"></div>
<div class="a t" style="left:1083px;top:480px;color:#f1f1f1;font-size:12px;line-height:12px;">Source Control</div>
<svg class="a" style="left:1345px;top:481px;" width="5" height="9" viewBox="0 0 5 9"><path d="M0 0 L4.5 4.5 L0 9 Z" fill="#999999"/></svg>
<div class="a" style="left:1079px;top:497px;width:278px;height:1px;background:#333337;"></div>
<div class="a t" style="left:1083px;top:505px;color:#f1f1f1;font-size:12px;line-height:12px;">Cut</div>
<div class="a t" style="left:1289px;top:505px;color:#f1f1f1;font-size:12px;line-height:12px;">Ctrl+X</div>
<div class="a t" style="left:1083px;top:527px;color:#656565;font-size:12px;line-height:12px;">Paste</div>
<div class="a t" style="left:1289px;top:527px;color:#656565;font-size:12px;line-height:12px;">Ctrl+V</div>
<div class="a t" style="left:1083px;top:549px;color:#f1f1f1;font-size:12px;line-height:12px;">Remove</div>
<div class="a t" style="left:1289px;top:549px;color:#f1f1f1;font-size:12px;line-height:12px;">Del</div>
<div class="a t" style="left:1083px;top:571px;color:#f1f1f1;font-size:12px;line-height:12px;">Rename</div>
<div class="a" style="left:1079px;top:588px;width:278px;height:1px;background:#333337;"></div>
<div class="a t" style="left:1083px;top:596px;color:#f1f1f1;font-size:12px;line-height:12px;">Unload Project</div>
<div class="a t" style="left:1083px;top:618px;color:#f1f1f1;font-size:12px;line-height:12px;">Load Project Dependencies</div>
<div class="a" style="left:1079px;top:635px;width:278px;height:1px;background:#333337;"></div>
<div class="a t" style="left:1083px;top:643px;color:#f1f1f1;font-size:12px;line-height:12px;">Open Folder in File Explorer</div>
<div class="a" style="left:1079px;top:660px;width:278px;height:1px;background:#333337;"></div>
<div class="a t" style="left:1083px;top:668px;color:#f1f1f1;font-size:12px;line-height:12px;">Properties</div>
<div class="a t" style="left:1289px;top:668px;color:#f1f1f1;font-size:12px;line-height:12px;">Alt+Enter</div>
<svg class="a" style="left:1054px;top:176px;" width="16" height="16" viewBox="0 0 16 16"><rect x="7" y="0" width="2" height="6" fill="#c8c8c8"/><path d="M4.3 2.8 L8 6.5 L11.7 2.8" stroke="#c8c8c8" stroke-width="2" fill="none"/><rect x="1" y="6" width="1.8" height="9" fill="#c8c8c8"/><rect x="14" y="6" width="1.8" height="9" fill="#c8c8c8"/><rect x="3.2" y="8.2" width="2" height="2" fill="#c8c8c8"/><rect x="7.2" y="8.2" width="2" height="2" fill="#c8c8c8"/><rect x="11.2" y="8.2" width="2" height="2" fill="#c8c8c8"/><path d="M1 11 H15.8 V15 H1 Z M5 12.2 V14 H7 V12.2 Z M9 12.2 V14 H11 V12.2 Z" fill="#c8c8c8" fill-rule="evenodd"/></svg>
<svg class="a" style="left:1054px;top:265px;" width="16" height="14" viewBox="0 0 16 14"><circle cx="6.5" cy="7" r="5.6" stroke="#3aa0f0" stroke-width="1.5" fill="none"/><path d="M5 1.5 V12.5 M8 1.5 V12.5 M1.2 5.2 H11.8 M1.2 8.8 H11.8" stroke="#3aa0f0" stroke-width="1.2" fill="none"/><path d="M8.5 13 C11.5 12.5 13 10.5 13 6.5" stroke="#1b1b1c" stroke-width="4" fill="none"/><path d="M8.5 13 C11.5 12.5 13 10.5 13 7" stroke="#3aa0f0" stroke-width="1.7" fill="none"/><path d="M10.3 7.8 L13 4 L15.7 7.8 Z" fill="#3aa0f0"/></svg>
<svg class="a" style="left:1054px;top:287px;" width="16" height="12" viewBox="0 0 16 12"><path d="M6.8 0.3 H10 L15.7 11.7 H0.3 Z" fill="#3aa8f0"/><path d="M7.8 4.2 L4.3 10.2 H10 Z" fill="#1b1b1c"/></svg>
<svg class="a" style="left:1054px;top:333px;" width="16" height="16" viewBox="0 0 16 16"><path d="M4.5 3 V0.5 H15 V10.5 H13.5" stroke="#c8c8c8" stroke-width="1.2" fill="none"/><rect x="4" y="0.5" width="11" height="1.8" fill="#c8c8c8"/><rect x="0.8" y="4" width="12" height="11" stroke="#c8c8c8" stroke-width="1.5" fill="#1b1b1c"/><rect x="0.8" y="4" width="12" height="2" fill="#c8c8c8"/><path d="M3 8.5 H4.5 M5.5 8.5 H10.5 M3 10.8 H4.5 M5.5 10.8 H10.5 M5.5 13 H10.5" stroke="#c8c8c8" stroke-width="1.1"/><path d="M14 3.5 V4.5 M14 6 V7" stroke="#1b1b1c"/></svg>
<svg class="a" style="left:1056px;top:380px;" width="12" height="16" viewBox="0 0 12 16"><path d="M6 4 C4.5 0.5 1.5 0.8 2.5 3.5 Z M6 4 C7.5 0.5 10.5 0.8 9.5 3.5 Z" stroke="#c8c8c8" stroke-width="1.3" fill="none"/><rect x="0.8" y="4.2" width="10.4" height="10.8" stroke="#c8c8c8" stroke-width="1.6" fill="#333334"/><path d="M6 4 V15 M0.8 9.5 H11.2" stroke="#c8c8c8" stroke-width="1.8"/><g fill="#111"><rect x="2.4" y="6" width="2.3" height="2.3"/><rect x="7.3" y="6" width="2.3" height="2.3"/><rect x="2.4" y="11" width="2.3" height="2.3"/><rect x="7.3" y="11" width="2.3" height="2.3"/></g></svg>
<svg class="a" style="left:1054px;top:406px;" width="15" height="15" viewBox="0 0 15 15"><path d="M7.5 0.3 L9 2.6 L11.7 1.9 L12.3 4.6 L14.7 6 L13.3 8.3 L14.3 10.8 L11.8 11.6 L11.2 14.3 L8.6 13.6 L6.5 14.7 L5.2 12.3 L2.5 12.3 L2.6 9.6 L0.3 8 L1.9 5.9 L1.2 3.3 L3.8 2.9 L5.1 0.5 Z" fill="#c8c8c8"/><circle cx="7.5" cy="7.5" r="2.8" fill="#1b1b1c"/><circle cx="7.5" cy="7.5" r="1.5" fill="#c8c8c8"/></svg>
<svg class="a" style="left:1055px;top:503px;" width="14" height="15" viewBox="0 0 14 15"><g stroke="#c8c8c8" stroke-width="1.3" fill="none"><circle cx="3" cy="11.5" r="2.3"/><circle cx="10.5" cy="11.5" r="2.3"/><path d="M4.3 9.6 L10 0.5 M9.2 9.6 L3.5 0.5"/></g></svg>
<svg class="a" style="left:1055px;top:525px;" width="13" height="14" viewBox="0 0 13 14"><g stroke="#555555" stroke-width="1.2" fill="none"><path d="M6.5 13.5 H12.5 V3.5 H10.5 L9.5 1 H7.5 L6.5 3.5 H5 V6"/><rect x="0.8" y="7" width="5.5" height="6.5"/></g></svg>
<svg class="a" style="left:1054px;top:548px;" width="15" height="14" viewBox="0 0 15 14"><path d="M1.5 1.5 L13.5 12.5 M13.5 1.5 L1.5 12.5" stroke="#f48771" stroke-width="2.4" stroke-linecap="round"/></svg>
<svg class="a" style="left:1054px;top:571px;" width="16" height="11" viewBox="0 0 16 11"><rect x="0.8" y="0.8" width="14.4" height="9.4" stroke="#c8c8c8" stroke-width="1.4" fill="#1b1b1c"/><path d="M2.5 2.5 H5.5 M4 2.5 V8.5 M2.5 8.5 H5.5" stroke="#c8c8c8" stroke-width="1"/></svg>
<svg class="a" style="left:1054px;top:640px;" width="15" height="15" viewBox="0 0 15 15"><path d="M4 13.5 C0.5 11 1 5.5 6 5.5 H11" stroke="#75beff" stroke-width="2.4" fill="none" stroke-linecap="round"/><path d="M9 1.5 L13.5 5.5 L9 9.5" stroke="#75beff" stroke-width="2.4" fill="none"/></svg>
<svg class="a" style="left:1054px;top:666px;" width="16" height="15" viewBox="0 0 16 15"><path d="M10.5 1 C8 1 6.5 3 6.8 5.3 L1.5 10.6 C0.8 11.3 0.8 12.7 1.5 13.4 C2.2 14.1 3.6 14.1 4.3 13.4 L9.6 8.1 C12 8.5 14 7 14 4.5 L14 3.5 L11.5 5.5 L9.5 5 L9.2 3.2 L11.5 1 Z" fill="#c8c8c8"/></svg>
<div class="a" style="left:1059px;top:162px;width:300px;height:8px;overflow:hidden"><div class="a" style="left:30px;top:3px;width:15px;height:13px;border:1.5px solid #8bd58b;box-sizing:border-box;background:#1e1e1e"></div><div class="a" style="left:14px;top:6px;width:3px;height:2px;background:#e0e0e0"></div><div class="a t" style="left:51px;top:5px;font-weight:bold;color:#fff;line-height:12px">EntityConsole</div></div>
<svg class="a" style="left:82px;top:485px" width="913" height="5"><defs><pattern id="p82485" width="4" height="4" patternUnits="userSpaceOnUse"><rect x="0" y="0" width="1" height="1" fill="#464646"/><rect x="2" y="2" width="1" height="1" fill="#464646"/></pattern></defs><rect width="913" height="5" fill="url(#p82485)"/></svg>
<svg class="a" style="left:1003px;top:485px;" width="8" height="4" viewBox="0 0 8 4"><path d="M0 0 H7.5 L3.75 3.8 Z" fill="#f1f1f1"/></svg>
<svg class="a" style="left:1019px;top:482px;" width="9" height="11" viewBox="0 0 9 11"><path d="M2 0.5 H7 M2.5 0.5 V6 M6.5 0.5 V6 M0.5 6.5 H8.5 M4.5 6.5 V10.5" stroke="#f1f1f1" stroke-width="1.3" fill="none"/><rect x="4" y="1" width="2.5" height="5" fill="#f1f1f1"/></svg>
<svg class="a" style="left:1035px;top:483px;" width="10" height="10" viewBox="0 0 10 10"><path d="M0.5 0.5 L9.5 9.5 M9.5 0.5 L0.5 9.5" stroke="#f1f1f1" stroke-width="1.4"/></svg>
<div class="a" style="left:452px;top:502px;width:1px;height:17px;background:#464646;"></div>
<div class="a" style="left:482px;top:502px;width:1px;height:17px;background:#464646;"></div>
<div class="a" style="left:534px;top:502px;width:1px;height:17px;background:#464646;"></div>
<div class="a" style="left:564px;top:502px;width:1px;height:17px;background:#464646;"></div>
<svg class="a" style="left:461px;top:503px;" width="14" height="16" viewBox="0 0 14 16"><path d="M3.5 8 V4.5 C3.5 2.5 4.5 1.5 6 1.5 C7.5 1.5 8 2.5 8 3.5 M1.5 6 L3.5 8.5 L5.5 6" stroke="#555" stroke-width="1.4" fill="none"/><rect x="5" y="7" width="7.5" height="1" fill="#555"/><rect x="2" y="9.5" width="5" height="2.5" fill="#555"/><rect x="2" y="13" width="10" height="1" fill="#555"/></svg>
<svg class="a" style="left:490px;top:503px;" width="14" height="16" viewBox="0 0 14 16"><path d="M6.5 4 H1.5 M4 1.5 L1.5 4 L4 6.5" stroke="#75beff" stroke-width="1.8" fill="none"/><g fill="#d0d0d0"><rect x="6" y="5" width="6" height="1.2"/><rect x="2" y="8" width="10" height="1.2"/><rect x="2" y="10.5" width="10" height="1.2"/><rect x="2" y="13" width="10" height="1.2"/></g></svg>
<svg class="a" style="left:512px;top:503px;" width="14" height="16" viewBox="0 0 14 16"><path d="M1.5 4 H6.5 M4 1.5 L6.5 4 L4 6.5" stroke="#75beff" stroke-width="1.8" fill="none"/><g fill="#d0d0d0"><rect x="6.5" y="5" width="6" height="1.2"/><rect x="2" y="8" width="10.5" height="1.2"/><rect x="2" y="10.5" width="10.5" height="1.2"/><rect x="2" y="13" width="10.5" height="1.2"/></g></svg>
<svg class="a" style="left:542px;top:503px;" width="15" height="16" viewBox="0 0 15 16"><path d="M1 1 L7 6.5 M7 1 L1 6.5" stroke="#f48771" stroke-width="1.5"/><g fill="#d0d0d0"><rect x="8" y="1" width="5.5" height="1.6"/><rect x="8" y="4" width="5.5" height="1.6"/><rect x="1" y="8.5" width="12.5" height="1.6"/><rect x="1" y="12" width="12.5" height="1.6"/></g></svg>
<svg class="a" style="left:571px;top:503px;" width="16" height="14" viewBox="0 0 16 14"><text x="0" y="6" font-family="Liberation Sans" font-size="7" font-weight="bold" fill="#d0d0d0">ab</text><text x="0" y="13" font-family="Liberation Sans" font-size="7" font-weight="bold" fill="#d0d0d0">c</text><path d="M14 3 V9.5 H7 M9.5 7 L7 9.5 L9.5 12" stroke="#d0d0d0" stroke-width="1.6" fill="none"/></svg>
<svg class="a" style="left:1038px;top:529px;" width="7" height="4" viewBox="0 0 7 4"><path d="M0 4 H7 L3.5 0 Z" fill="#999999"/></svg>
<div class="a" style="left:1032px;top:559px;width:14px;height:2px;background:#e0e0e0;"></div>
<svg class="a" style="left:38px;top:666px;" width="4" height="7" viewBox="0 0 4 7"><path d="M4 0 V7 L0 3.5 Z" fill="#555555"/></svg>
<svg class="a" style="left:4px;top:712px;" width="17" height="11" viewBox="0 0 17 11"><path d="M4 0.7 H16 L12.5 10.3 H0.7 Z" stroke="#fff" stroke-width="1.3" fill="none"/></svg>
<svg class="a" style="left:1016px;top:710px;" width="9" height="12" viewBox="0 0 9 12"><path d="M4.5 12 V1.5 M0.8 5 L4.5 1.2 L8.2 5" stroke="#fff" stroke-width="1.7" fill="none"/></svg>
<svg class="a" style="left:1064px;top:709px;" width="13" height="13" viewBox="0 0 13 13"><path d="M1 12 L1.5 9 L9 1.5 L11.5 4 L4 11.5 Z" fill="#e0e0e0"/><path d="M7.8 2.8 L10.3 5.3" stroke="#007acc" stroke-width="0.8"/></svg>
<svg class="a" style="left:1112px;top:709px;" width="15" height="15" viewBox="0 0 15 15"><path d="M7.5 0.5 L14.5 7.5 L7.5 14.5 L0.5 7.5 Z" fill="#e8e8e8"/><circle cx="6" cy="4.8" r="1.3" fill="#007acc"/><circle cx="6" cy="10" r="1.3" fill="#007acc"/><circle cx="9.5" cy="7.5" r="1.3" fill="#007acc"/><path d="M6 4.8 V10 M6 4.8 L9.5 7.5" stroke="#007acc" stroke-width="1"/></svg>
<svg class="a" style="left:1230px;top:709px;" width="16" height="15" viewBox="0 0 16 15"><path d="M2.5 1 V4 C2.5 7 8 7 8 10 V14 M13.5 1 V4 C13.5 7 8 7 8 10" stroke="#e8e8e8" stroke-width="2" fill="none"/><circle cx="2.5" cy="2" r="1.8" fill="#e8e8e8"/><circle cx="13.5" cy="2" r="1.8" fill="#e8e8e8"/></svg>
<svg class="a" style="left:1297px;top:714px;" width="8" height="5" viewBox="0 0 8 5"><path d="M0 5 H8 L4 0 Z" fill="#fff"/></svg>
<svg class="a" style="left:1327px;top:707px;" width="22" height="17" viewBox="0 0 22 17"><path d="M2 13 H12 L10.5 10.5 V6.5 C10.5 3.5 9 2 7 2 C5 2 3.5 3.5 3.5 6.5 V10.5 Z" fill="#c8c8c8"/><circle cx="7" cy="14.5" r="1.6" fill="#c8c8c8"/><circle cx="13.5" cy="12.5" r="5" fill="#e51400"/><text x="13.5" y="15.8" text-anchor="middle" font-family="Liberation Sans" font-size="9" font-weight="bold" fill="#fff">4</text></svg>
</body></html>
